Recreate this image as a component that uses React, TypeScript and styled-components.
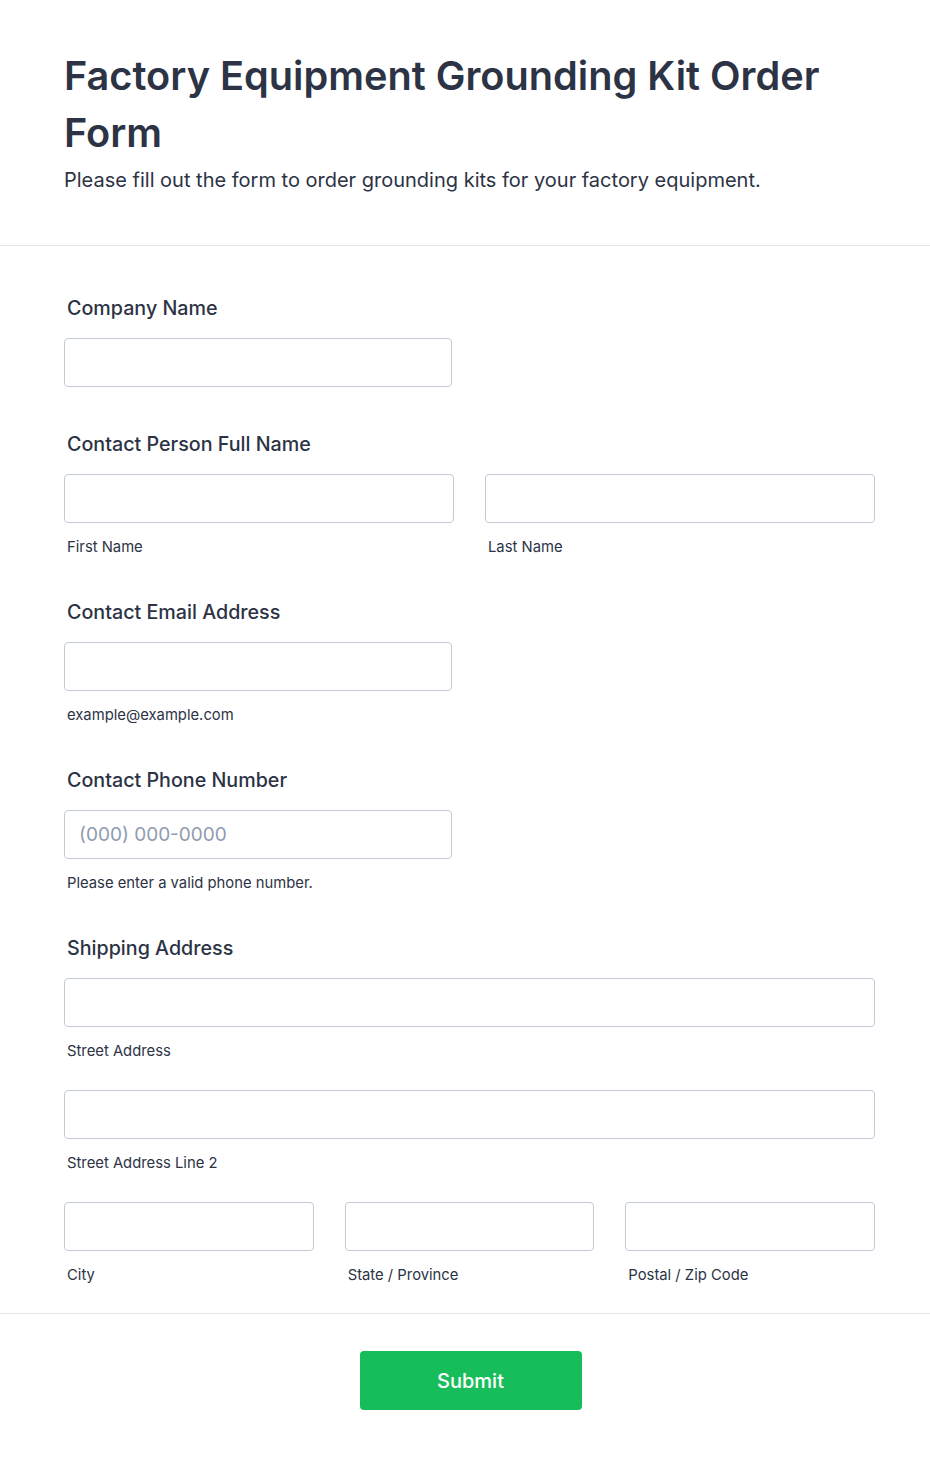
import styled, { createGlobalStyle } from "styled-components";

const GlobalStyle = createGlobalStyle`
  * {
    box-sizing: border-box;
  }
  body {
    margin: 0;
    background: #ffffff;
    font-family: Inter, "Noto Sans", "Liberation Sans", sans-serif;
    color: #2c3345;
  }
`;

const Page = styled.div`
  width: 930px;
  background: #ffffff;
`;

const Header = styled.header`
  padding: 48px 64px 50px;
  border-bottom: 1px solid #e3e5ec;
`;

const Title = styled.h1`
  margin: 0;
  font-size: 39.7px;
  font-weight: 600;
  line-height: 57px;
  color: #2c3345;
`;

const Subtitle = styled.p`
  margin: 3px 0 0;
  font-size: 20px;
  line-height: 30px;
  color: #2c3345;
`;

const FormBody = styled.section`
  padding: 47px 55px 30px 64px;
  border-bottom: 1px solid #e3e5ec;
  display: flex;
  flex-direction: column;
  gap: 42px;
`;

const Field = styled.div`
  display: flex;
  flex-direction: column;
`;

const Label = styled.label`
  font-size: 19.7px;
  font-weight: 500;
  line-height: 30px;
  padding-left: 3px;
  margin-bottom: 15px;
  color: #2c3345;
`;

const Row = styled.div<{ $cols: number }>`
  display: grid;
  grid-template-columns: repeat(${(p) => p.$cols}, 1fr);
  column-gap: 31px;
`;

const Cell = styled.div`
  display: flex;
  flex-direction: column;
`;

const Input = styled.input<{ $width?: number }>`
  width: ${(p) => (p.$width ? `${p.$width}px` : "100%")};
  height: 49px;
  border: 1px solid #c3cad8;
  border-radius: 4px;
  background: #ffffff;
  padding: 0 14px;
  font-family: inherit;
  font-size: 19px;
  color: #2c3345;
  outline: none;

  &::placeholder {
    color: #8f9bb0;
  }
`;

const SubLabel = styled.span`
  font-size: 14.8px;
  line-height: 16px;
  padding-left: 3px;
  margin-top: 16px;
  color: #2c3345;
`;

const Stack = styled.div`
  display: flex;
  flex-direction: column;
  gap: 31px;
`;

const Footer = styled.footer`
  display: flex;
  justify-content: center;
  padding: 37px 0 50px;
`;

const SubmitButton = styled.button`
  width: 222px;
  height: 59px;
  margin-left: 11px;
  border: none;
  border-radius: 4px;
  background: #18bd5b;
  color: #ffffff;
  font-family: inherit;
  font-size: 20px;
  font-weight: 500;
  cursor: pointer;
`;

export default function App() {
  return (
    <Page>
      <GlobalStyle />
      <Header>
        <Title>Factory Equipment Grounding Kit Order Form</Title>
        <Subtitle>
          Please fill out the form to order grounding kits for your factory
          equipment.
        </Subtitle>
      </Header>

      <FormBody>
        <Field>
          <Label>Company Name</Label>
          <Input $width={388} />
        </Field>

        <Field>
          <Label>Contact Person Full Name</Label>
          <Row $cols={2}>
            <Cell>
              <Input />
              <SubLabel>First Name</SubLabel>
            </Cell>
            <Cell>
              <Input />
              <SubLabel>Last Name</SubLabel>
            </Cell>
          </Row>
        </Field>

        <Field>
          <Label>Contact Email Address</Label>
          <Input $width={388} />
          <SubLabel>example@example.com</SubLabel>
        </Field>

        <Field>
          <Label>Contact Phone Number</Label>
          <Input $width={388} placeholder="(000) 000-0000" />
          <SubLabel>Please enter a valid phone number.</SubLabel>
        </Field>

        <Field>
          <Label>Shipping Address</Label>
          <Stack>
            <Cell>
              <Input />
              <SubLabel>Street Address</SubLabel>
            </Cell>
            <Cell>
              <Input />
              <SubLabel>Street Address Line 2</SubLabel>
            </Cell>
            <Row $cols={3}>
              <Cell>
                <Input />
                <SubLabel>City</SubLabel>
              </Cell>
              <Cell>
                <Input />
                <SubLabel>State / Province</SubLabel>
              </Cell>
              <Cell>
                <Input />
                <SubLabel>Postal / Zip Code</SubLabel>
              </Cell>
            </Row>
          </Stack>
        </Field>
      </FormBody>

      <Footer>
        <SubmitButton>Submit</SubmitButton>
      </Footer>
    </Page>
  );
}
